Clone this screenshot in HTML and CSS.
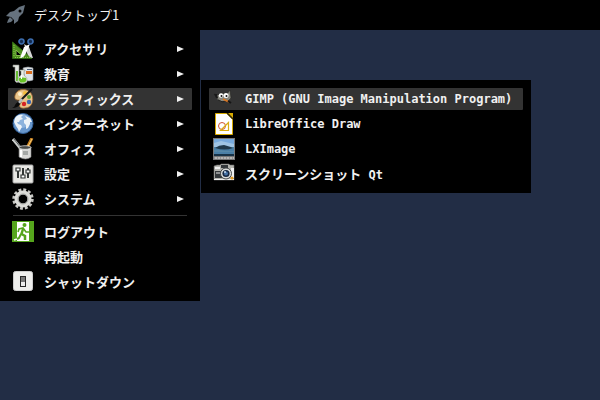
FILE: index.html
```
<!DOCTYPE html>
<html lang="ja">
<head>
  <meta charset="UTF-8" />
  <meta name="viewport" content="width=device-width, initial-scale=1.0"/>
  <title>デスクトップ1</title>
  <link rel="stylesheet" href="styles.css">
</head>
<body>
  <header class="panel">
    <svg class="rocket" viewBox="0 0 20 20">
      <path fill="#66727e" d="M19 0L13 2L8 6L4 7L0 11L5 12L8 15L8 19L12 16L13 12L17 8Z"/>
      <path fill="#66727e" d="M4 12L2 15L1 18L5 17L7 15Z"/>
      <circle cx="14" cy="6" r="1.500" fill="#000"/>
    </svg>
    <h1 class="panel-title">デスクトップ1</h1>
  </header>

  <nav class="menu">
    <ul class="menu-list">
      <li>
        <button class="item" type="button">
          <svg class="icon" viewBox="0 0 22 22">
            <path fill="#4e8f20" stroke="#2f6a10" d="M.500 4L20 20.500L.500 20.500Z"/>
            <path fill="#000" stroke="#83bd4b" d="M4 12L10 17.500L4 17.500Z"/>
            <path stroke="#8cc653" d="M2 7v12M3 19.500h15" stroke-dasharray="1 1"/>
            <path fill="#d8d8d8" d="M12 6L17 9L21 20Q17 20 15 15Z"/>
            <path fill="#fff" d="M18 6L12 9L8 20Q12 20 14 15Z"/>
            <circle cx="9.500" cy="3.500" r="2.500" fill="#142c50" stroke="#3c6cad" stroke-width="1.700"/>
            <circle cx="18.500" cy="3.500" r="2.500" fill="#142c50" stroke="#3c6cad" stroke-width="1.700"/>
          </svg>
          <span class="label">アクセサリ</span>
          <span class="arrow"></span>
        </button>
      </li>
      <li>
        <button class="item" type="button">
          <svg class="icon" viewBox="0 0 22 22">
            <path fill="#e3e6e2" stroke="#8a8f88" stroke-width=".6" d="M1 2h6v16q-2 3-4 0V4H1z"/>
            <path fill="#67bd32" d="M4 8h2v10H4z"/>
            <path fill="#dfe3e6" stroke="#8d949a" stroke-width=".6" d="M11 5q5-2 10 0v12q-4 2-8 0z"/>
            <path fill="#d96d1c" d="M14 8h6v3h-6z"/>
            <path fill="#4c5f78" d="M15 6h5v1h-5z"/>
            <path fill="#e9eee6" stroke="#8b9687" stroke-width=".6" d="M8 7h5v1h-1v4q4 3 3 7q-4 3-9 0q-1-4 3-7V8H8z"/>
            <path fill="#68c326" d="M7 15q4-1 7 0q1 3-1 4q-3 1-5 0q-2-2-1-4z"/>
            <path fill="#fff" d="M9 12h1v4H9z"/>
          </svg>
          <span class="label">教育</span>
          <span class="arrow"></span>
        </button>
      </li>
      <li class="has-submenu">
        <button class="item active" type="button" aria-expanded="true">
          <svg class="icon" viewBox="0 0 22 22">
            <path fill="#e9c58c" stroke="#98612a" stroke-width=".8" d="M6 3C11 0 18 2 20 7C22 13 20 20 13 20C8 21 6 18 9 15C10 13 8 12 5 12C1 11 3 5 6 3Z"/>
            <circle cx="8" cy="6" r="2" fill="#fff1ce"/>
            <circle cx="13" cy="5" r="2" fill="#f2bc3b"/>
            <circle cx="17" cy="9" r="2" fill="#64a83a"/>
            <circle cx="17" cy="14" r="2.200" fill="#3b67b2"/>
            <circle cx="12" cy="16" r="2.200" fill="#d62424"/>
            <path stroke="#16181a" stroke-width="2" d="M20 1L9 12"/>
            <path stroke="#b8bec2" stroke-width="2.500" d="M10 11L7 15"/>
            <path fill="#090909" d="M6 14l2 2q-2 4-8 4q3-1 3-3q1-2 3-3z"/>
          </svg>
          <span class="label">グラフィックス</span>
          <span class="arrow"></span>
        </button>

        <ul class="menu-list submenu">
          <li>
            <button class="item active" type="button">
              <svg class="icon" viewBox="0 0 22 22">
                <path fill="#85857c" stroke="#22221f" stroke-width=".6" d="M1 6L5 7L8 5L14 6L17 2L18 10Q16 14 10 14Q4 13 4 10Z"/>
                <path fill="#191919" d="M1 6l3 0l1 4l-2 0z"/>
                <circle cx="8" cy="7.500" r="2.200" fill="#fff"/>
                <circle cx="13" cy="7.500" r="2.500" fill="#fff"/>
                <circle cx="8.500" cy="8" r="1" fill="#111"/>
                <circle cx="13.500" cy="8" r="1" fill="#111"/>
                <path stroke="#222" d="M5 12q4 3 8 1" fill="none"/>
                <path stroke="#d97520" stroke-width="1.800" d="M10 11L16 14"/>
                <path stroke="#151515" stroke-width="2" d="M15 13L18 15"/>
              </svg>
              <span class="label latin">GIMP (GNU Image Manipulation Program)</span>
            </button>
          </li>
          <li>
            <button class="item" type="button">
              <svg class="icon" viewBox="0 0 22 22">
                <path fill="#fff" stroke="#d6a900" d="M2.500 .500h12l5 5v16h-17z"/>
                <path fill="#d6a900" d="M13 0h7v7z"/>
                <path stroke="#332900" stroke-width="1.500" d="M14 0L20 6"/>
                <circle cx="9" cy="13" r="3.500" fill="none" stroke="#d05432"/>
                <path fill="none" stroke="#d9ad13" stroke-width="1.200" d="M15.500 9.500v8h-8z"/>
              </svg>
              <span class="label latin">LibreOffice Draw</span>
            </button>
          </li>
          <li>
            <button class="item" type="button">
              <svg class="icon" viewBox="0 0 22 22">
                <path fill="#777" d="M0 0h22v22H0z"/>
                <path fill="#78aadd" d="M1 1h20v17H1z"/>
                <path fill="#9fc4e4" d="M1 5l7-2l13 3v3H1z"/>
                <path fill="#4a7fa6" d="M1 9h20v9H1z"/>
                <path fill="#20394b" d="M2 10q4-3 9-3q4 1 9 3q-8 3-18 0z"/>
                <path fill="#5788a7" d="M1 12h6l5 1h9v1H1z"/>
                <path fill="#173247" d="M1 16h20v2H1z"/>
                <path fill="#b4b4b4" d="M1 19h20v2H1z"/>
                <path stroke="#737373" d="M1 20h20" stroke-dasharray="1 2"/>
              </svg>
              <span class="label latin">LXImage</span>
            </button>
          </li>
          <li>
            <button class="item" type="button">
              <svg class="icon" viewBox="0 0 22 22">
                <path fill="#b5b5b0" stroke="#666" stroke-width=".6" d="M1 3l3-1h3l1-1h8l1 1h4v15H1z"/>
                <path fill="#34383b" d="M8 2h7v3H8zM2 8h7v7H2z"/>
                <path fill="#eee" d="M2 4h5v2H2zM18 5h3v10h-3zM1 16h20v1H1z"/>
                <path stroke="#e6e6e6" d="M3 10h4"/>
                <circle cx="13" cy="10.500" r="5.500" fill="#dcdddc" stroke="#44484a"/>
                <circle cx="13" cy="10.500" r="3.600" fill="#152844"/>
                <circle cx="13" cy="10.500" r="2" fill="#4773a7"/>
                <circle cx="12" cy="9" r="1" fill="#c8dcf0"/>
                <circle cx="19" cy="15" r="1.500" fill="#e19a20"/>
              </svg>
              <span class="label">スクリーンショット<span class="latin"> Qt</span></span>
            </button>
          </li>
        </ul>
      </li>
      <li>
        <button class="item" type="button">
          <svg class="icon" viewBox="0 0 22 22">
            <circle cx="11" cy="10.500" r="10" fill="#6897cc" stroke="#315f99"/>
            <circle cx="10" cy="8" r="7" fill="#8db3dd"/>
            <path fill="#edf3f8" d="M3 5Q6 1 11 2L9 4L11 6L8 7L7 9L5 9L6 11L9 12L10 14L7 19L6 16L4 13L2 9ZM13 3L18 5L20 9L18 9L18 11L16 15L14 16L14 12L12 10L12 7L15 6Z"/>
          </svg>
          <span class="label">インターネット</span>
          <span class="arrow"></span>
        </button>
      </li>
      <li>
        <button class="item" type="button">
          <svg class="icon" viewBox="0 0 22 22">
            <path stroke="#c9ccca" stroke-width="3" d="M1 1L9 11"/>
            <path stroke="#565b5d" stroke-width="1" d="M2 1L9 10"/>
            <path stroke="#c98120" stroke-width="3" d="M20 0L15 10"/>
            <path stroke="#f4cd77" d="M20 1L15 10"/>
            <path fill="#d8d8d6" stroke="#888" stroke-width=".6" d="M7 9h12v10q-5 4-12 0z"/>
            <ellipse cx="13" cy="9.500" rx="6" ry="1.800" fill="#464846" stroke="#eee" stroke-width=".7"/>
            <path fill="#fff" d="M8 12h2v7H8z"/>
            <path fill="#a5a8a6" d="M11 13h5v4h-5z"/>
          </svg>
          <span class="label">オフィス</span>
          <span class="arrow"></span>
        </button>
      </li>
      <li>
        <button class="item" type="button">
          <svg class="icon" viewBox="0 0 22 22">
            <rect x="1" y="2" width="20" height="18" rx="1" fill="#e8e8e4" stroke="#aaa"/>
            <path stroke="#333735" stroke-width="2" d="M6 5v10M11 5v10M16 5v10"/>
            <path fill="#fff" stroke="#333735" stroke-width="1.200" d="M4 5h4v3H4zM9 12h4v3H9zM14 7h4v3h-4z"/>
          </svg>
          <span class="label">設定</span>
          <span class="arrow"></span>
        </button>
      </li>
      <li>
        <button class="item" type="button">
          <svg class="icon" viewBox="0 0 22 22">
            <circle cx="11" cy="11" r="9" fill="none" stroke="#c7c7c3" stroke-width="3.400" stroke-dasharray="2.800 1.912"/>
            <circle cx="11" cy="11" r="6.500" fill="none" stroke="#dcdcd8" stroke-width="4"/>
            <circle cx="11" cy="11" r="5" fill="none" stroke="#a2a4a1"/>
          </svg>
          <span class="label">システム</span>
          <span class="arrow"></span>
        </button>
      </li>
      <li class="separator"></li>
      <li>
        <button class="item" type="button">
          <svg class="icon" viewBox="0 0 22 22">
            <path fill="#55a51c" d="M0 0h22v21H0z"/>
            <path fill="#fff" d="M5 1h12v19H5z"/>
            <circle cx="12.500" cy="4" r="2" fill="#55a51c"/>
            <path fill="none" stroke="#55a51c" stroke-width="1.600" d="M6 11L7 8L11 7L14 11L17 11"/>
            <path fill="none" stroke="#55a51c" stroke-width="2.500" d="M11 8L9.500 13L13 15L13 19"/>
            <path fill="none" stroke="#fff" stroke-width="1.600" d="M2 19L5 18"/>
            <path fill="none" stroke="#55a51c" stroke-width="2" d="M5 18L7 17L9 13"/>
          </svg>
          <span class="label">ログアウト</span>
        </button>
      </li>
      <li>
        <button class="item" type="button">
          <span class="icon"></span>
          <span class="label">再起動</span>
        </button>
      </li>
      <li>
        <button class="item" type="button">
          <svg class="icon" viewBox="0 0 22 22">
            <rect x="1.500" y=".500" width="19" height="19" rx="2" fill="#eeeeec" stroke="#ccc"/>
            <rect x="8.500" y="5.500" width="5" height="10" fill="#eee" stroke="#272727"/>
            <path fill="#777" d="M9 6h4v5H9z"/>
          </svg>
          <span class="label">シャットダウン</span>
        </button>
      </li>
    </ul>
  </nav>
</body>
</html>
```

FILE: styles.css
```
* {
  margin: 0;
  padding: 0;
  box-sizing: border-box;
}

body {
  background-color: #222d45;
  color: #f0f0f0;
  font-family: "Noto Sans CJK JP", sans-serif;
  font-size: 13px;
}

.panel {
  display: flex;
  align-items: center;
  gap: 8px;
  height: 30px;
  padding: 0 6px;
  background: #000;
}

.rocket {
  width: 20px;
  height: 20px;
}

.panel-title {
  font-size: 13px;
  font-weight: 400;
  line-height: 20px;
}

.menu {
  width: 200px;
}

.menu-list {
  display: flex;
  flex-direction: column;
  gap: 3px;
  padding: 8px;
  background: #000;
  list-style: none;
}

.item {
  display: flex;
  align-items: center;
  gap: 10px;
  width: 100%;
  height: 22px;
  padding: 0 8px 0 4px;
  border: none;
  border-radius: 1px;
  background: transparent;
  color: inherit;
  font: inherit;
  font-weight: 700;
  line-height: 22px;
  text-align: left;
  white-space: nowrap;
}

.item:hover,
.item.active {
  background: #333;
}

.icon {
  flex: none;
  width: 22px;
  height: 22px;
  fill: none;
}

.label {
  flex: 1;
}

.latin {
  font-family: "DejaVu Sans Mono", monospace;
  font-size: 12px;
}

.arrow {
  border-left: 7px solid #f0f0f0;
  border-top: 3px solid transparent;
  border-bottom: 3px solid transparent;
}

.separator {
  height: 1px;
  margin: 2px 5px;
  background: #333;
}

.has-submenu {
  position: relative;
}

/* opens beside the parent item */
.submenu {
  position: absolute;
  top: -8px;
  left: 193px;
  width: 330px;
}
```
